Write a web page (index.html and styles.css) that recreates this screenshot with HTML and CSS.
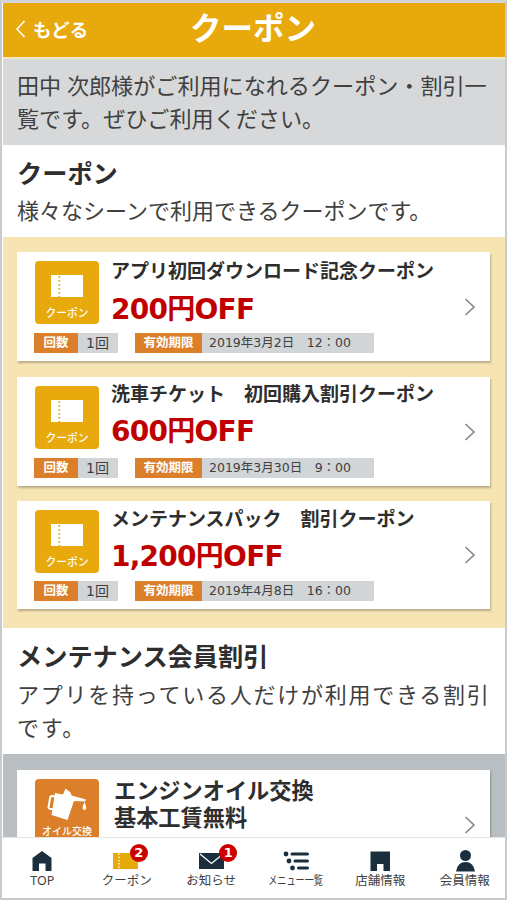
FILE: index.html
```
<!DOCTYPE html>
<html lang="ja">
<head>
    <meta charset="UTF-8">
    <meta name="viewport" content="width=device-width, initial-scale=1.0">
    <title>クーポン</title>
    <link rel="stylesheet" href="styles.css">
</head>
<body>
    <svg class="defs" width="0" height="0">
        <symbol id="ticket" viewBox="0 0 32 22">
            <path d="M0 0H32V22H0Z" fill="#fff"/>
            <path d="M8.3 1V22" stroke="#e8a90c" stroke-width="1.7" stroke-dasharray="1.8 2.2"/>
        </symbol>
        <symbol id="arrow" viewBox="0 0 12 18">
            <path d="M1.5 1L10 9L1.5 17" fill="none" stroke="#858585" stroke-width="1.6"/>
        </symbol>
    </svg>

    <div class="app">
        <header class="header">
            <a class="back" href="#">
                <svg width="11" height="18" viewBox="0 0 11 18"><path d="M9.5 1L2 9L9.5 17" fill="none" stroke="#fff" stroke-width="1.5"/></svg>
                <span>もどる</span>
            </a>
            <h1>クーポン</h1>
        </header>

        <main class="main">
            <p class="lead">田中 次郎様がご利用になれるクーポン・割引一覧です。ぜひご利用ください。</p>

            <section class="intro">
                <h2>クーポン</h2>
                <p>様々なシーンで利用できるクーポンです。</p>
            </section>

            <div class="list">
                <a class="card card-first" href="#">
                    <div class="tile">
                        <svg width="32" height="22"><use href="#ticket"/></svg>
                        <span>クーポン</span>
                    </div>
                    <div class="text">
                        <h3>アプリ初回ダウンロード記念クーポン</h3>
                        <p class="price">200<span class="yen">円</span>OFF</p>
                    </div>
                    <svg class="arrow" width="12" height="18"><use href="#arrow"/></svg>
                    <div class="info">
                        <span class="label">回数</span><span class="value count">1回</span>
                        <span class="label limit">有効期限</span><span class="value date">2019年3月2日　12：00</span>
                    </div>
                </a>
                <a class="card" href="#">
                    <div class="tile">
                        <svg width="32" height="22"><use href="#ticket"/></svg>
                        <span>クーポン</span>
                    </div>
                    <div class="text">
                        <h3>洗車チケット　初回購入割引クーポン</h3>
                        <p class="price">600<span class="yen">円</span>OFF</p>
                    </div>
                    <svg class="arrow" width="12" height="18"><use href="#arrow"/></svg>
                    <div class="info">
                        <span class="label">回数</span><span class="value count">1回</span>
                        <span class="label limit">有効期限</span><span class="value date">2019年3月30日　9：00</span>
                    </div>
                </a>
                <a class="card card-last" href="#">
                    <div class="tile">
                        <svg width="32" height="22"><use href="#ticket"/></svg>
                        <span>クーポン</span>
                    </div>
                    <div class="text">
                        <h3>メンテナンスパック　割引クーポン</h3>
                        <p class="price">1,200<span class="yen">円</span>OFF</p>
                    </div>
                    <svg class="arrow" width="12" height="18"><use href="#arrow"/></svg>
                    <div class="info">
                        <span class="label">回数</span><span class="value count">1回</span>
                        <span class="label limit">有効期限</span><span class="value date">2019年4月8日　16：00</span>
                    </div>
                </a>
            </div>

            <section class="intro intro-member">
                <h2>メンテナンス会員割引</h2>
                <p>アプリを持っている人だけが利用できる割引です。</p>
            </section>

            <div class="list list-member">
                <a class="card card-member" href="#">
                    <div class="tile tile-oil">
                        <svg width="42" height="34" viewBox="0 0 42 34">
                            <path d="M10 9.500L5.500 9Q4.600 9 4.300 10L2.500 20Q2.300 21.500 3.800 21.800L7 22.300" fill="none" stroke="#fff" stroke-width="2"/>
                            <path d="M9 6L17 7.500L19.500 1.500L24.500 5.500L25.500 8.500L40 12.500L39 14.500L28 14L21.500 33L5.500 28Z" fill="#fff"/>
                            <path d="M38.500 15Q34.500 22.800 38.500 23Q42 22.800 38.500 15Z" fill="#fff"/>
                        </svg>
                        <span>オイル交換</span>
                    </div>
                    <h3>エンジンオイル交換<br>基本工賃無料</h3>
                    <svg class="arrow" width="12" height="18"><use href="#arrow"/></svg>
                </a>
            </div>
        </main>

        <nav class="nav">
            <a href="#">
                <svg width="26" height="22" viewBox="0 0 26 22"><path d="M13 1L22.500 8V21H16.500V13.500H10V21H3.500V8Z" fill="#1b2e3d"/></svg>
                <span>TOP</span>
            </a>
            <a href="#">
                <span class="icon">
                    <svg width="26" height="22" viewBox="0 0 26 22"><path d="M0 3H25V19H0Z" fill="#e8a90c"/><path d="M6 3.500V19" stroke="#fff" stroke-width="1.400" stroke-dasharray="1.400 1.800"/></svg>
                    <b class="badge">2</b>
                </span>
                <span>クーポン</span>
            </a>
            <a href="#">
                <span class="icon icon-mail">
                    <svg width="26" height="22" viewBox="0 0 26 22"><path d="M1 3H26V19H1Z" fill="#1b2e3d"/><path d="M2 4L13.500 13.500L25 4" fill="none" stroke="#fff" stroke-width="1.300"/></svg>
                    <b class="badge">1</b>
                </span>
                <span>お知らせ</span>
            </a>
            <a href="#">
                <svg width="26" height="22" viewBox="0 0 26 22">
                    <g fill="#1b2e3d"><circle cx="3" cy="4" r="2.400"/><circle cx="6" cy="11" r="2.400"/><circle cx="9.500" cy="18" r="2.400"/></g>
                    <path d="M9 4H24.500M12 11H24.500M15.500 18H24.500" stroke="#1b2e3d" stroke-width="3" stroke-linecap="round"/>
                </svg>
                <span class="narrow">メニュー一覧</span>
            </a>
            <a href="#">
                <svg width="26" height="22" viewBox="0 0 26 22"><path d="M3.500 1.500H23V21H16.500V14H10V21H3.500Z" fill="#1b2e3d"/></svg>
                <span>店舗情報</span>
            </a>
            <a href="#">
                <svg width="26" height="22" viewBox="0 0 26 22"><circle cx="13.500" cy="5.500" r="5.500" fill="#1b2e3d"/><path d="M4 21.500Q5.500 12 13.500 12Q21.500 12 23 21.500Z" fill="#1b2e3d"/></svg>
                <span>会員情報</span>
            </a>
        </nav>
    </div>
</body>
</html>
```
FILE: styles.css
```
* {
    box-sizing: border-box;
}

body {
    margin: 0;
    font-family: "Noto Sans", "Noto Sans CJK JP", sans-serif;
    color: #404040;
    background-color: #e4e5e8;
}

h1, h2, h3, p {
    margin: 0;
}

a {
    color: inherit;
    text-decoration: none;
}

svg {
    display: block;
    flex: none;
}

.defs {
    position: absolute;
}

.app {
    display: flex;
    flex-direction: column;
    width: 507px;
    height: 900px;
    border: 2px solid #c9cacc;
    border-top: 3px solid #d3d5da;
    padding-left: 1px;
    background-color: #fff;
    overflow: hidden;
}

.header {
    display: grid;
    grid-template-columns: 1fr auto 1fr;
    align-items: center;
    flex: none;
    height: 56px;
    padding: 0 14px 0 12px;
    background-color: #e8a90c;
    border-bottom: 2px solid #f2e8c8;
    color: #fff;
}

.header h1 {
    font-size: 31.5px;
    line-height: 50px;
    padding-bottom: 4px;
}

.back {
    display: flex;
    align-items: center;
    gap: 7px;
    padding-bottom: 2px;
    font-size: 18.5px;
    font-weight: bold;
}

.main {
    flex: 1;
    min-height: 0;
    overflow: hidden;
}

.lead {
    height: 86px;
    padding: 10px 12px 10px 14px;
    font-size: 22.1px;
    line-height: 33px;
    background-color: #d6d8da;
    word-break: break-all;
}

.intro {
    height: 92px;
    padding: 10px 12px 0 14px;
}

.intro h2 {
    color: #2e2e2e;
    font-size: 25.2px;
    line-height: 36px;
}

.intro p {
    font-size: 22px;
    line-height: 33px;
    padding-top: 3px;
}

.intro-member {
    height: 126px;
}

.intro-member p {
    padding-top: 4px;
    letter-spacing: 1.75px;
    margin-right: -6px;
}

.list {
    display: flex;
    flex-direction: column;
    gap: 16px;
    height: 391px;
    padding: 15px 15px 0 14px;
    background-color: #f7e4b3;
}

.list-member {
    padding-top: 16px;
    background-color: #b9bec2;
}

.card {
    display: grid;
    grid-template-columns: 64px 1fr 12px;
    grid-template-rows: 63px 20px;
    column-gap: 12px;
    row-gap: 9px;
    flex: none;
    height: 109px;
    padding: 9px 14px 0 18px;
    background-color: #fff;
    box-shadow: 1px 2px 2px rgba(0, 0, 0, 0.25);
}

.card-last {
    height: 108px;
    margin-top: -1px;
    row-gap: 8px;
}

.tile {
    display: flex;
    flex-direction: column;
    align-items: center;
    height: 63px;
    padding-top: 14px;
    border-radius: 4px;
    background-color: #e8a90c;
    color: #fff;
}

.tile span {
    margin-top: 7px;
    font-size: 10.8px;
    font-weight: 500;
    line-height: 18px;
    white-space: nowrap;
}

.text {
    margin-top: -4px;
}

.card-first .text {
    margin-top: -2px;
}

.card-last .text {
    margin-top: -3px;
}

.text h3 {
    color: #2e2e2e;
    font-size: 19px;
    line-height: 24px;
    white-space: nowrap;
}

.price {
    margin-top: 1px;
    color: #c00000;
    font-family: "DejaVu Sans", "Noto Sans CJK JP", sans-serif;
    font-size: 28px;
    font-weight: bold;
    line-height: 50px;
    letter-spacing: -0.75px;
    white-space: nowrap;
}

.card-first .price {
    margin-top: 2px;
}

.yen {
    font-size: 28px;
}

.arrow {
    margin-top: 37px;
}

.card-last .arrow {
    margin-top: 36px;
}

.info {
    display: flex;
    grid-column: 1 / -1;
    margin-left: -1px;
    line-height: 20px;
    font-size: 13px;
    white-space: nowrap;
}

.label {
    width: 44px;
    background-color: #db7f2b;
    color: #fff;
    font-size: 12.5px;
    font-weight: bold;
    text-align: center;
    line-height: 19px;
}

.limit {
    width: 67px;
    margin-left: 17px;
}

.value {
    background-color: #d2d5d7;
    font-family: "DejaVu Sans", "Noto Sans CJK JP", sans-serif;
}

.count {
    width: 40px;
    padding-left: 8px;
    font-size: 14px;
}

.date {
    width: 172px;
    padding-left: 7px;
    font-size: 12.5px;
    line-height: 20px;
}

.tile-oil {
    padding-top: 8px;
    background-color: #db7f2b;
}

.tile-oil span {
    margin-top: 1px;
    font-size: 10px;
}

.card-member {
    column-gap: 15px;
}

.card-member h3 {
    margin-top: -2px;
    color: #2e2e2e;
    font-size: 22.2px;
    line-height: 27px;
}

.nav {
    display: grid;
    grid-template-columns: repeat(6, 1fr);
    flex: none;
    height: 61px;
    margin: 0 -2px 0 -3px;
    padding-top: 12px;
    border-top: 1px solid #e4e4e4;
    background-color: #fff;
}

.nav a {
    display: flex;
    flex-direction: column;
    align-items: center;
    font-size: 12.5px;
    line-height: 18px;
    white-space: nowrap;
}

.icon {
    position: relative;
    margin-right: 2px;
}

.icon-mail {
    margin-right: 0;
}

.badge {
    position: absolute;
    top: -6px;
    left: 17px;
    width: 18px;
    height: 18px;
    border-radius: 50%;
    background-color: #cc0000;
    color: #fff;
    font-family: "DejaVu Sans", sans-serif;
    font-size: 13px;
    line-height: 18px;
    text-align: center;
}

.icon-mail .badge {
    left: 21px;
}

.narrow {
    transform: scaleX(0.73);
}
```
